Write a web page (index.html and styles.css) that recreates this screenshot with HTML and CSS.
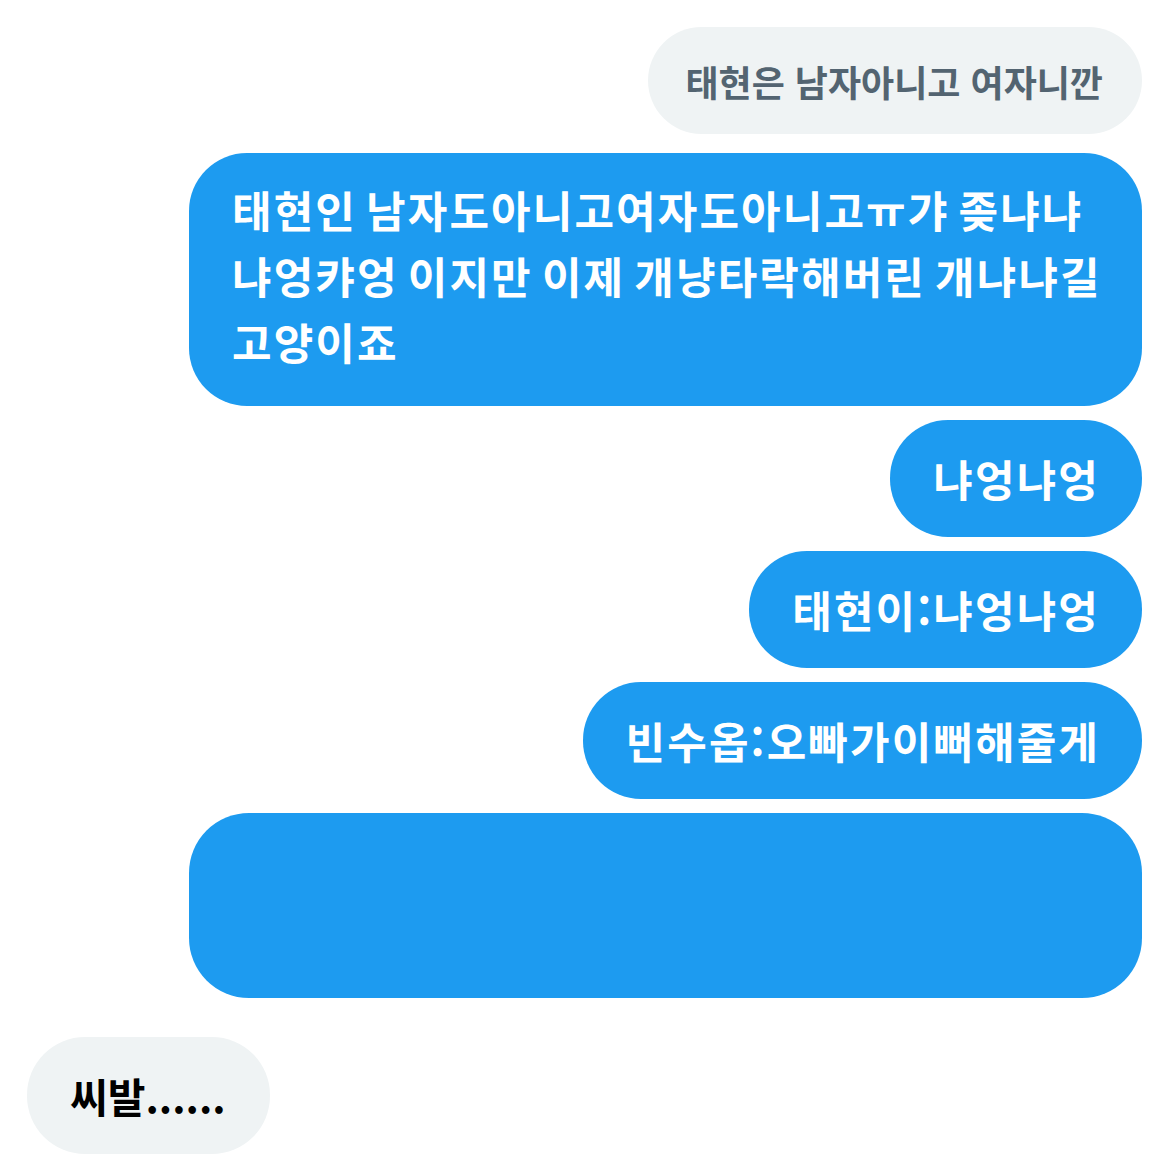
FILE: index.html
```html
<!DOCTYPE html>
<html lang="ko">
<head>
    <meta charset="UTF-8">
    <meta name="viewport" content="width=device-width, initial-scale=1.0">
    <title>대화</title>
    <link rel="stylesheet" href="styles.css">
</head>
<body>
    <div class="chat">
        <div class="bubble in-gray">태현은 남자아니고 여자니깐</div>
        <div class="bubble out multi">태현인 남자도아니고여자도아니고ㅠ갸 좆냐냐<br>냐엉캬엉 이지만 이제 개냥타락해버린 개냐냐길<br>고양이죠</div>
        <div class="bubble out">냐엉냐엉</div>
        <div class="bubble out">태현이:냐엉냐엉</div>
        <div class="bubble out">빈수옵:오빠가이뻐해줄게</div>
        <div class="bubble out blank"></div>
        <div class="bubble them">씨발......</div>
    </div>
</body>
</html>
```

FILE: styles.css
```css
* { margin: 0; padding: 0; box-sizing: border-box; }
body { font-family: "Noto Sans CJK KR", "Noto Sans", sans-serif; background: #fff; }
.chat { display: flex; flex-direction: column; align-items: flex-end; gap: 14px; padding: 27px 28px 0 27px; }
.bubble { max-width: 953px; border-radius: 58px; font-weight: 700; font-size: 43px; letter-spacing: 2.1px; word-spacing: -5px; line-height: 62px; padding: 27px 42px 28px 43px; white-space: nowrap; }
.out { background: #1d9bf0; color: #fff; }
.multi { width: 953px; line-height: 66px; padding: 23px 42px 32px 43px; }
.blank { width: 953px; height: 185px; padding: 0; border-radius: 60px; }
.in-gray { background: #eff3f4; color: #536471; font-size: 36px; letter-spacing: 0; word-spacing: 0; line-height: 58px; padding: 25px 39px 24px 37px; margin-bottom: 5px; border-radius: 54px; }
.them { align-self: flex-start; background: #eff3f4; color: #000; font-size: 41px; letter-spacing: 0; word-spacing: 0; margin-top: 25px; padding: 27px 44px 28px 43px; }
```
